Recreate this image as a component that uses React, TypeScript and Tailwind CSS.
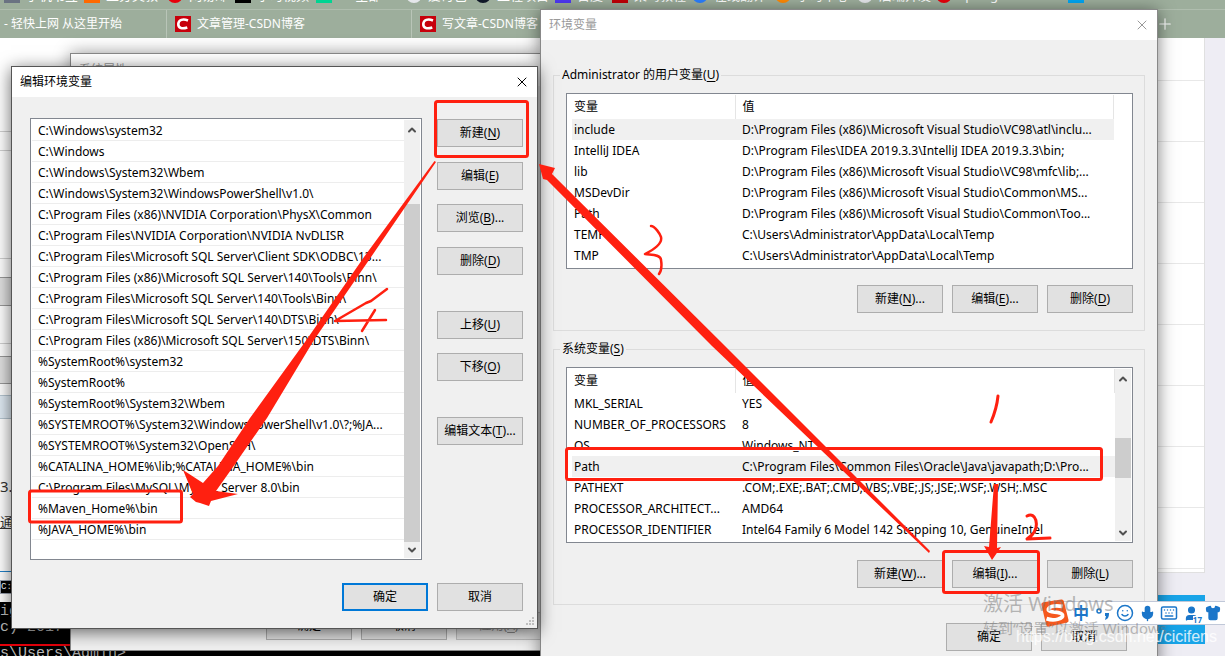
import React from 'react';
import { ChevronDown, ChevronUp, Keyboard, Mic, Plus, Shirt, Smile, User, X } from 'lucide-react';

const paths = [
  'C:\\Windows\\system32',
  'C:\\Windows',
  'C:\\Windows\\System32\\Wbem',
  'C:\\Windows\\System32\\WindowsPowerShell\\v1.0\\',
  'C:\\Program Files (x86)\\NVIDIA Corporation\\PhysX\\Common',
  'C:\\Program Files\\NVIDIA Corporation\\NVIDIA NvDLISR',
  'C:\\Program Files\\Microsoft SQL Server\\Client SDK\\ODBC\\13...',
  'C:\\Program Files (x86)\\Microsoft SQL Server\\140\\Tools\\Binn\\',
  'C:\\Program Files\\Microsoft SQL Server\\140\\Tools\\Binn\\',
  'C:\\Program Files\\Microsoft SQL Server\\140\\DTS\\Binn\\',
  'C:\\Program Files (x86)\\Microsoft SQL Server\\150\\DTS\\Binn\\',
  '%SystemRoot%\\system32',
  '%SystemRoot%',
  '%SystemRoot%\\System32\\Wbem',
  '%SYSTEMROOT%\\System32\\WindowsPowerShell\\v1.0\\?;%JA...',
  '%SYSTEMROOT%\\System32\\OpenSSH\\',
  '%CATALINA_HOME%\\lib;%CATALINA_HOME%\\bin',
  'C:\\Program Files\\MySQL\\MySQL Server 8.0\\bin',
  '%Maven_Home%\\bin',
  '%JAVA_HOME%\\bin',
];

const userVars = [
  ['include', 'D:\\Program Files (x86)\\Microsoft Visual Studio\\VC98\\atl\\inclu...'],
  ['IntelliJ IDEA', 'D:\\Program Files\\IDEA 2019.3.3\\IntelliJ IDEA 2019.3.3\\bin;'],
  ['lib', 'D:\\Program Files (x86)\\Microsoft Visual Studio\\VC98\\mfc\\lib;...'],
  ['MSDevDir', 'D:\\Program Files (x86)\\Microsoft Visual Studio\\Common\\MS...'],
  ['Path', 'D:\\Program Files (x86)\\Microsoft Visual Studio\\Common\\Too...'],
  ['TEMP', 'C:\\Users\\Administrator\\AppData\\Local\\Temp'],
  ['TMP', 'C:\\Users\\Administrator\\AppData\\Local\\Temp'],
];

const systemVars = [
  ['MKL_SERIAL', 'YES'],
  ['NUMBER_OF_PROCESSORS', '8'],
  ['OS', 'Windows_NT'],
  ['Path', 'C:\\Program Files\\Common Files\\Oracle\\Java\\javapath;D:\\Pro...'],
  ['PATHEXT', '.COM;.EXE;.BAT;.CMD;.VBS;.VBE;.JS;.JSE;.WSF;.WSH;.MSC'],
  ['PROCESSOR_ARCHITECT...', 'AMD64'],
  ['PROCESSOR_IDENTIFIER', 'Intel64 Family 6 Model 142 Stepping 10, GenuineIntel'],
];

const bookmarks = [
  { icon: 'bg-gray-500', width: 'w-[80px]', name: '手机书签' },
  { icon: 'bg-orange-500', width: 'w-[83px]', name: '五分类教' },
  { icon: 'bg-red-600 rounded-full', width: 'w-[68px]', name: '网易邮' },
  { icon: 'bg-black', width: 'w-[81px]', name: '学习视频' },
  { icon: 'bg-emerald-400', width: 'w-[90px]', name: '···  全部' },
  { icon: 'bg-gray-200 rounded-full', width: 'w-[69px]', name: '爱奇艺' },
  { icon: 'bg-gray-900 rounded-full', width: 'w-[80px]', name: '工程项目' },
  { icon: 'bg-indigo-600', width: 'w-[57px]', name: '百度' },
  { icon: 'bg-red-700', width: 'w-[80px]', name: '菜鸟教程' },
  { icon: 'bg-blue-500 rounded-full', width: 'w-[83px]', name: '在线翻译' },
  { icon: 'bg-orange-400 rounded-full', width: 'w-[82px]', name: '学习中心' },
  { icon: 'bg-gray-200 rounded-full', width: 'w-[79px]', name: '后端开发' },
  { icon: 'bg-red-600 rounded-full', width: 'w-[132px]', name: 'Spring' },
  { icon: 'bg-sky-500', width: 'w-[110px]', name: '' },
];

function Button({ text, hot, tail = '', className = 'border-[#adadad]' }: { text: string; hot?: string; tail?: string; className?: string }) {
  return (
    <button className={`flex h-7 w-[86px] shrink-0 items-center justify-center border bg-[#e1e1e1] whitespace-nowrap ${className}`}>
      <span>
        {text}
        {hot && (
          <>
            (<span className="underline underline-offset-2">{hot}</span>)
          </>
        )}
        {tail}
      </span>
    </button>
  );
}

function ScrollBar({ before, thumb, after }: { before: string; thumb: string; after: string }) {
  return (
    <div className="flex w-4 shrink-0 flex-col bg-[#f0f0f0] text-[#505050]">
      <div className="flex h-4 shrink-0 items-center justify-center pt-1">
        <ChevronUp size={12} strokeWidth={4} />
      </div>
      <div className={before} />
      <div className={`bg-[#cdcdcd] ${thumb}`} />
      <div className={after} />
      <div className="flex h-4 shrink-0 items-center justify-center">
        <ChevronDown size={12} strokeWidth={4} />
      </div>
    </div>
  );
}

function VarTable({ rows, selected, scroll }: { rows: string[][]; selected: string; scroll?: boolean }) {
  return (
    <div className="flex h-44 border border-[#828790] bg-white p-px">
      <div className="min-w-0 flex-1 pl-1">
        <table className="w-full table-fixed border-collapse text-left">
          <thead>
            <tr className="h-6">
              <th className="w-[163px] border-r border-[#e5e5e5] pl-0.5 font-normal">变量</th>
              <th className="border-r border-[#e5e5e5] pl-[7px] font-normal">值</th>
            </tr>
          </thead>
          <tbody>
            {rows.map(([name, value]) => (
              <tr key={name} className={`h-[21px] ${name === selected ? 'bg-[#f0f0f0]' : ''}`}>
                <td className="pl-0.5 whitespace-nowrap">{name}</td>
                <td className="overflow-hidden pl-[7px] whitespace-nowrap">{value}</td>
              </tr>
            ))}
          </tbody>
        </table>
      </div>
      {scroll ? <ScrollBar before="h-[53px]" thumb="h-10" after="flex-1" /> : <div className="w-[17px] shrink-0" />}
    </div>
  );
}

function CsdnLogo() {
  return (
    <svg width="16" height="16" viewBox="0 0 16 16" className="shrink-0">
      <rect width="16" height="16" fill="#c7000b" />
      <path d="M13 4.5C8 2.5 3.5 3.7 3.3 8s4 5 9 3.4" fill="none" stroke="#fff" strokeWidth="2.6" />
    </svg>
  );
}

function Browser() {
  return (
    <div className="flex min-h-screen flex-col bg-[#eeedf4]">
      <header className="h-[38px] shrink-0 overflow-hidden bg-[#9dae9c] text-white">
        <div className="flex h-[10px] items-end overflow-hidden border-b border-[#afbdae] pb-1 pl-1">
          {bookmarks.map((b) => (
            <a key={b.icon + b.width} href="#" className={`flex h-4 shrink-0 items-end gap-1.5 text-[13px] leading-5 whitespace-pre ${b.width}`}>
              <span className={`mb-0.5 h-4 w-4 shrink-0 ${b.icon}`} />
              {b.name}
            </a>
          ))}
        </div>
        <nav className="flex h-7">
          <a href="#" className="flex w-[167px] shrink-0 items-center border-r border-[#b9c5b8] pl-1 whitespace-nowrap">- 轻快上网 从这里开始</a>
          <a href="#" className="flex w-[245px] shrink-0 items-center gap-1.5 border-r border-[#b9c5b8] pl-2 whitespace-nowrap">
            <CsdnLogo />
            文章管理-CSDN博客
          </a>
          <a href="#" className="flex flex-1 items-center gap-1.5 pl-2 whitespace-nowrap">
            <CsdnLogo />
            写文章-CSDN博客
          </a>
          <button aria-label="新标签页" className="flex w-[69px] items-center">
            <Plus size={18} strokeWidth={1.5} />
          </button>
        </nav>
      </header>
      <div className="flex flex-1 justify-between">
        <div className="flex w-[541px] flex-col bg-white text-[15px] text-[#333]">
          <div className="h-[94px] border-b border-[#d0d0d0]" />
          <div className="h-[19px] border-b border-[#d0d0d0]" />
          <div className="h-[108px] border-b border-[#d0d0d0]" />
          <div className="mt-[18px] h-[29px] border-y border-[#999] bg-[#e1e1e1]" />
          <div className="h-[38px] border-b border-[#d0d0d0]" />
          <div className="mt-3 h-[28px] border-y border-[#999] bg-[#e1e1e1]" />
          <div className="mt-[11px] h-6 border-t border-b border-[#b5c5d0] bg-[#dfeaf3]" />
          <p className="mt-[59px]">3.</p>
          <p className="mt-5 text-[13px] underline">通</p>
          <div className="mt-[41px] h-[9px] border-t border-[#2080c8]" />
          <div className="w-8 border border-gray-400 bg-black font-['Liberation_Mono'] text-[9px] leading-3 text-white">C:\</div>
          <div className="mt-2 flex-1 overflow-hidden bg-black pt-0.5 font-['Liberation_Mono','Noto_Sans_CJK_SC',monospace] text-[15px] leading-4 text-[#bbb]">
            <p>ight</p>
            <p className="w-[71px] overflow-hidden border-b-2 border-red-600 pb-2 whitespace-nowrap">c) 2017 版权</p>
            <p className="h-3 whitespace-nowrap">s\Users\Admin&gt;</p>
          </div>
        </div>
        <div className="flex w-[88px] flex-col pr-5">
          <div className="h-[535px] border-r border-b border-[#e0e0e0] bg-white">
            {[0, 1, 2, 3, 4, 5, 6, 7, 8].map((n) => (
              <div key={n} className={`border-b border-[#e8e8e8] ${n === 0 ? 'h-[43px]' : 'h-[61px]'}`} />
            ))}
          </div>
          <div className="mt-[22px] h-[49px] bg-[#18a4e8]" />
        </div>
      </div>
    </div>
  );
}

function PropertiesWindow() {
  return (
    <section className="absolute top-[53px] left-[70px] flex h-[598px] w-[473px] flex-col border border-[#888] bg-[#f0f0f0] shadow-[0_0_16px_rgba(0,0,0,0.4)]">
      <header className="flex h-8 items-center justify-between bg-white px-2 text-[#999]">
        <h2>系统属性</h2>
        <X size={15} strokeWidth={1} />
      </header>
      <div className="mt-auto flex justify-end gap-[9px] pb-2.5">
        <Button text="确定" />
        <Button text="取消" />
        <Button text="应用" hot="A" className="border-[#bfbfbf] text-[#888]" />
      </div>
    </section>
  );
}

function EnvironmentWindow() {
  return (
    <section className="absolute top-[9px] left-[540px] flex h-[660px] w-[618px] flex-col border border-[#888] bg-[#f0f0f0] shadow-[0_2px_16px_rgba(0,0,0,0.5)]">
      <header className="flex h-[30px] shrink-0 items-center justify-between bg-white pr-[7px] pl-2 text-[#999]">
        <h2>环境变量</h2>
        <button aria-label="关闭">
          <X size={16} strokeWidth={1.5} />
        </button>
      </header>
      <div className="px-3 pt-[25px]">
        <fieldset className="h-[266px] border border-[#dcdcdc] pr-[11px] pl-3">
          <legend className="-ml-1.5 px-0.5 leading-5">
            Administrator 的用户变量(<span className="underline underline-offset-2">U</span>)
          </legend>
          <div className="pt-2">
            <VarTable rows={userVars} selected="include" />
          </div>
          <div className="flex justify-end gap-[9px] pt-4">
            <Button text="新建" hot="N" tail="..." />
            <Button text="编辑" hot="E" tail="..." />
            <Button text="删除" hot="D" />
          </div>
        </fieldset>
        <fieldset className="mt-2 h-[266px] border border-[#dcdcdc] pr-[11px] pl-3">
          <legend className="-ml-1.5 px-0.5 leading-5">
            系统变量(<span className="underline underline-offset-2">S</span>)
          </legend>
          <div className="pt-2">
            <VarTable rows={systemVars} selected="Path" scroll />
          </div>
          <div className="flex justify-end gap-[9px] pt-[17px]">
            <Button text="新建" hot="W" tail="..." />
            <Button text="编辑" hot="I" tail="..." />
            <Button text="删除" hot="L" />
          </div>
        </fieldset>
        <div className="flex justify-end gap-[9px] pt-[18px] pr-[18px]">
          <Button text="确定" />
          <Button text="取消" />
        </div>
      </div>
    </section>
  );
}

function EditWindow() {
  return (
    <section className="absolute top-[66px] left-[11px] flex h-[563px] w-[527px] flex-col border border-[#555] bg-[#f0f0f0] shadow-[0_3px_16px_rgba(0,0,0,0.6)]">
      <header className="flex h-[30px] shrink-0 items-center justify-between bg-white pr-[7px] pl-2">
        <h1>编辑环境变量</h1>
        <button aria-label="关闭">
          <X size={16} strokeWidth={1.5} />
        </button>
      </header>
      <div className="flex gap-[15px] pt-[21px] pr-[14px] pl-[18px]">
        <div className="flex h-[442px] min-w-0 flex-1 border border-[#828790] bg-white p-px">
          <ul className="min-w-0 flex-1">
            {paths.map((path) => (
              <li key={path} className="h-[21px] border-b border-[#ededed] pl-1.5 leading-[22px] whitespace-nowrap">
                {path}
              </li>
            ))}
          </ul>
          <ScrollBar before="h-[68px]" thumb="flex-1" after="h-0" />
        </div>
        <div className="flex flex-col pt-px">
          <Button text="新建" hot="N" />
          <Button text="编辑" hot="E" className="mt-[15px] border-[#adadad]" />
          <Button text="浏览" hot="B" tail="..." className="mt-3.5 border-[#adadad]" />
          <Button text="删除" hot="D" className="mt-[15px] border-[#adadad]" />
          <Button text="上移" hot="U" className="mt-9 border-[#adadad]" />
          <Button text="下移" hot="O" className="mt-3.5 border-[#adadad]" />
          <Button text="编辑文本" hot="T" tail="..." className="mt-9 border-[#adadad]" />
        </div>
      </div>
      <div className="flex justify-end gap-[9px] pt-[23px] pr-[14px]">
        <Button text="确定" className="border-2 border-[#0078d7]" />
        <Button text="取消" />
      </div>
      <svg width="9" height="9" className="mt-auto mr-0.5 mb-0.5 ml-auto" fill="#bfbfbf">
        <path d="M6 0h2v2H6zM3 3h2v2H3zM6 3h2v2H6zM0 6h2v2H0zM3 6h2v2H3zM6 6h2v2H6z" />
      </svg>
    </section>
  );
}

// red pen marks: boxes, arrows and step numbers
function Annotations() {
  return (
    <svg className="pointer-events-none absolute top-0 left-0" width="1225" height="656" viewBox="0 0 1225 656" fill="none" stroke="#ff2010" strokeWidth="3" strokeLinecap="round" strokeLinejoin="round">
      <rect x="435.5" y="101.5" width="92" height="55" rx="2" />
      <rect x="29.5" y="491" width="152" height="31" rx="2" />
      <rect x="566.5" y="448.5" width="535" height="31" rx="2" />
      <rect x="943.5" y="551.5" width="95" height="41" rx="2" />
      <g fill="#ff2010" stroke="none">
        <path d="M434.5 161L436 162 369 260 314 340 267 418 233 467 216 491 238 494 211 501 209 506 200 503 196 502 190 497 193 494 183 470 203 483 218 466 250 418 305 342 364 257Z" />
        <path d="M539 164L555 168 552 174 720 341 930 551 929 553 712 346 547 180 543 179Z" />
        <path d="M994 484L998 484 997 548 1001 547 992 560 984 546 989 547Z" />
      </g>
      <path strokeWidth="2.5" d="M387 289L371 301 366 303 335 321M335 321L386 320M375 310L362 331" />
      <path d="M998 396C997 406 994 415 991 422" />
      <path d="M1027 516C1036 511 1040 526 1032 535L1027 539 1050 538" />
      <path strokeWidth="2.5" d="M651 226C655 226 660 234 661 237 662 241 659 247 645 254 650 255 661 254 661 260 662 266 662 270 659 274" />
    </svg>
  );
}

function InputBar() {
  return (
    <div className="absolute top-[601px] left-[1047px] flex h-6 w-[178px] items-center rounded-l border-y border-l border-[#c0c8d8] bg-white text-[#1b76c9]">
      <svg width="30" height="30" viewBox="0 0 32 30" className="-ml-2 shrink-0">
        <path d="M4 6L23 3 28 23 9 27Z" fill="#f5581d" stroke="#f5581d" strokeWidth="5" strokeLinejoin="round" />
        <path d="M24 8C14 6 8 9 9 12 10 15 23 13 24 17 25 21 15 24 7 21" fill="none" stroke="#fff" strokeWidth="4" />
      </svg>
      <span className="w-[22px] text-center text-base leading-5 font-bold">中</span>
      <svg width="22" height="16" viewBox="0 0 22 16" className="shrink-0">
        <circle cx="7" cy="6" r="2" fill="none" stroke="currentColor" strokeWidth="1.5" />
        <path d="M13 8h4c0 4-1 6-4 7l1-4h-1z" fill="currentColor" />
      </svg>
      <button aria-label="表情" className="flex w-[22px] shrink-0 justify-center">
        <Smile size={18} />
      </button>
      <button aria-label="语音" className="flex w-[22px] shrink-0 justify-center">
        <Mic size={17} fill="currentColor" />
      </button>
      <button aria-label="键盘" className="flex w-[22px] shrink-0 justify-center">
        <Keyboard size={18} />
      </button>
      <button className="relative flex w-[22px] shrink-0 justify-center">
        <User size={17} fill="currentColor" />
        <span className="absolute right-0 -bottom-0.5 bg-white text-[8px] leading-2 font-bold">17</span>
      </button>
      <button aria-label="皮肤" className="flex w-[22px] shrink-0 justify-center">
        <Shirt size={16} fill="currentColor" />
      </button>
    </div>
  );
}

export default function App() {
  return (
    <main className="relative min-h-screen overflow-hidden font-['Noto_Sans','Noto_Sans_CJK_SC',sans-serif] text-[12px] leading-4 text-black">
      <Browser />
      <PropertiesWindow />
      <EnvironmentWindow />
      <EditWindow />
      <Annotations />
      <InputBar />
      <div className="pointer-events-none absolute top-[590px] left-[983px] whitespace-nowrap text-[#777]/50">
        <p className="text-[20px] leading-7">激活 Windows</p>
        <p className="text-[15px] leading-5">转到“设置”以激活 Windows。</p>
      </div>
      <div className="pointer-events-none absolute top-[627px] left-[1016px] font-['Liberation_Sans'] text-[16px] leading-5 whitespace-nowrap text-white/80">
        https://blog.csdn.net/cicifens
      </div>
    </main>
  );
}
